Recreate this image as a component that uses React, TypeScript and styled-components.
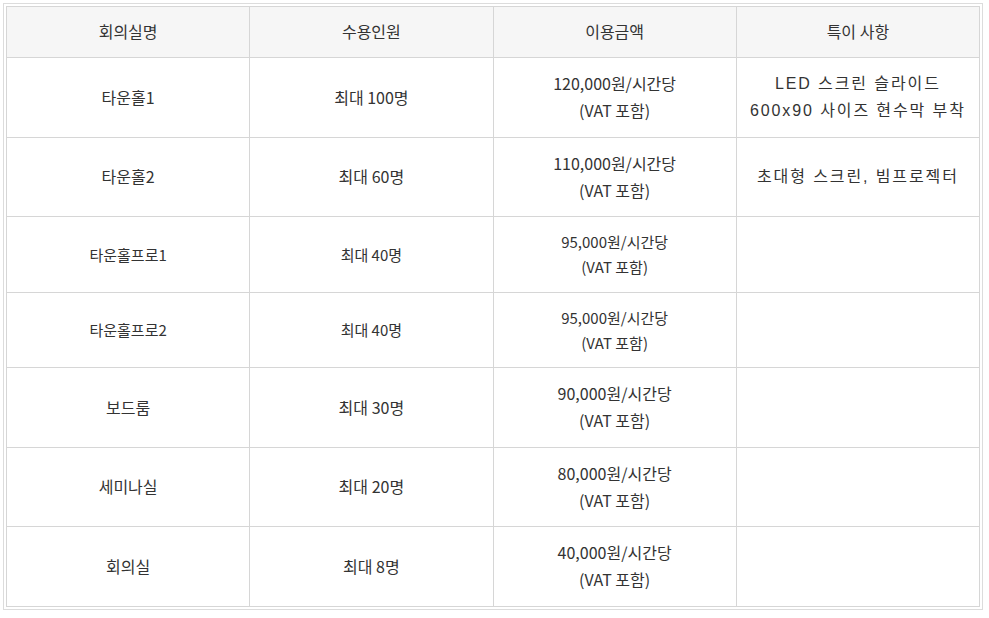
import React from "react"
import { createGlobalStyle, styled } from "styled-components"

const GlobalStyle = createGlobalStyle`
  html, body {
    margin: 0;
    padding: 0;
    background: #ffffff;
  }
  body {
    font-family: "Noto Sans CJK KR", "Noto Sans", "Liberation Sans", sans-serif;
    color: #333333;
  }
`

const Frame = styled.div`
  margin: 3px;
  width: 980px;
  box-sizing: border-box;
  border: 1px solid #dcdcdc;
  padding: 2px;
`

const Table = styled.table`
  width: 100%;
  border-collapse: collapse;
  table-layout: fixed;
`

const HeadCell = styled.th`
  background: #f6f6f6;
  border: 1px solid #d6d6d6;
  padding: 11px 8px 12px;
  font-size: 16px;
  font-weight: 400;
  line-height: 27px;
  color: #333333;
  text-align: center;
`

const Cell = styled.td<{ $compact?: boolean }>`
  border: 1px solid #d6d6d6;
  padding: 12px 8px 12.5px;
  font-size: ${(p) => (p.$compact ? "15px" : "16px")};
  line-height: ${(p) => (p.$compact ? "25px" : "27px")};
  color: #333333;
  text-align: center;
  vertical-align: middle;
`

// the notes column is set in a different face in the source page
const NoteCell = styled(Cell)`
  font-family: "Liberation Sans", "Noto Sans CJK KR", sans-serif;
  font-size: 16px;
  line-height: 27px;
  letter-spacing: 1.9px;
  padding-left: 2px;
  padding-right: 2px;
`

type Room = {
  name: string
  capacity: string
  price: string
  note?: string[]
  compact?: boolean
}

const rooms: Room[] = [
  {
    name: "타운홀1",
    capacity: "최대 100명",
    price: "120,000원/시간당",
    note: ["LED 스크린 슬라이드", "600x90 사이즈 현수막 부착"],
  },
  {
    name: "타운홀2",
    capacity: "최대 60명",
    price: "110,000원/시간당",
    note: ["초대형 스크린, 빔프로젝터"],
  },
  { name: "타운홀프로1", capacity: "최대 40명", price: "95,000원/시간당", compact: true },
  { name: "타운홀프로2", capacity: "최대 40명", price: "95,000원/시간당", compact: true },
  { name: "보드룸", capacity: "최대 30명", price: "90,000원/시간당" },
  { name: "세미나실", capacity: "최대 20명", price: "80,000원/시간당" },
  { name: "회의실", capacity: "최대 8명", price: "40,000원/시간당" },
]

const headers = ["회의실명", "수용인원", "이용금액", "특이 사항"]

export default function App() {
  return (
    <>
      <GlobalStyle />
      <Frame>
        <Table>
          <thead>
            <tr>
              {headers.map((h) => (
                <HeadCell key={h}>{h}</HeadCell>
              ))}
            </tr>
          </thead>
          <tbody>
            {rooms.map((r) => (
              <tr key={r.name}>
                <Cell $compact={r.compact}>{r.name}</Cell>
                <Cell $compact={r.compact}>{r.capacity}</Cell>
                <Cell $compact={r.compact}>
                  {r.price}
                  <br />
                  (VAT 포함)
                </Cell>
                <NoteCell>
                  {r.note?.map((line, i) => (
                    <React.Fragment key={line}>
                      {i > 0 && <br />}
                      {line}
                    </React.Fragment>
                  ))}
                </NoteCell>
              </tr>
            ))}
          </tbody>
        </Table>
      </Frame>
    </>
  )
}
